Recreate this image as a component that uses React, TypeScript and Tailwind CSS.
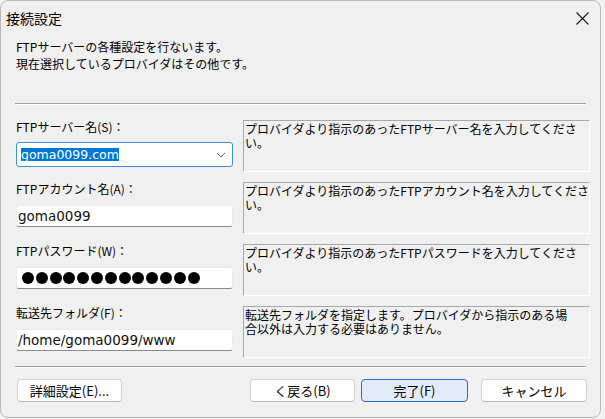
import React from 'react';

interface Field {
  label: string;
  help: string[];
  kind: 'combo' | 'text' | 'password';
  value: string;
}

const fields: Field[] = [
  {
    label: 'FTPサーバー名(S)：',
    help: ['プロバイダより指示のあったFTPサーバー名を入力してくださ', 'い。'],
    kind: 'combo',
    value: 'goma0099.com',
  },
  {
    label: 'FTPアカウント名(A)：',
    help: ['プロバイダより指示のあったFTPアカウント名を入力してくださ', 'い。'],
    kind: 'text',
    value: 'goma0099',
  },
  {
    label: 'FTPパスワード(W)：',
    help: ['プロバイダより指示のあったFTPパスワードを入力してくださ', 'い。'],
    kind: 'password',
    value: '',
  },
  {
    label: '転送先フォルダ(F)：',
    help: ['転送先フォルダを指定します。プロバイダから指示のある場', '合以外は入力する必要はありません。'],
    kind: 'text',
    value: '/home/goma0099/www',
  },
];

function Separator() {
  return <div className="ml-[14px] w-[571px] border-t border-b border-t-[#a0a0a0] border-b-[#ffffff]" />;
}

function FieldInput({ field }: { field: Field }) {
  if (field.kind === 'combo') {
    return (
      <div className="flex h-[25px] w-[217px] items-center justify-between rounded-[3px] border border-[#3d8ee0] bg-white pl-[4px] pr-[6px]">
        <span className="bg-[#0078d7] font-['DejaVu_Sans',sans-serif] text-[12.5px] leading-[13px] text-white">
          {field.value}
        </span>
        <svg width="10" height="6" viewBox="0 0 10 6" fill="none">
          <polyline points="1,1 5,5 9,1" stroke="#606060" strokeWidth="1" />
        </svg>
      </div>
    );
  }

  return (
    <div className="mt-px flex h-[22px] w-[217px] items-center rounded-[3px] border border-[#ececec] border-b-[#8a8a8a] bg-white pl-[1px]">
      {field.kind === 'password' ? (
        <div className="flex gap-[1.8px] pl-[4px]">
          {Array.from({ length: 13 }).map((_, i) => (
            <span key={i} className="h-[12px] w-[12px] rounded-full bg-black" />
          ))}
        </div>
      ) : (
        <span className="font-['DejaVu_Sans',sans-serif] text-[13.5px] text-[#111]">{field.value}</span>
      )}
    </div>
  );
}

export default function App() {
  return (
    <div className="h-[419px] w-[605px] overflow-hidden bg-[#f3f3f3] font-['Noto_Sans_CJK_JP',sans-serif] text-black">
      <div className="h-[418px] w-[601px] rounded-[8px] border border-[#b9b9b9] bg-[#f0f0f0]">
        {/* title bar */}
        <div className="flex h-[34px] items-center justify-between pl-[5px] pr-[11px]">
          <span className="text-[14px] leading-none">接続設定</span>
          <svg width="13" height="13" viewBox="0 0 13 13" fill="none">
            <line x1="0.5" y1="0.5" x2="12.5" y2="12.5" stroke="#1a1a1a" strokeWidth="1.1" />
            <line x1="12.5" y1="0.5" x2="0.5" y2="12.5" stroke="#1a1a1a" strokeWidth="1.1" />
          </svg>
        </div>

        <div className="mt-[3px] pl-[15px] text-[12px] leading-[17px]">
          <p>FTPサーバーの各種設定を行ないます。</p>
          <p>現在選択しているプロバイダはその他です。</p>
        </div>

        <div className="mt-[31px]">
          <Separator />
        </div>

        <div className="mt-[15px] flex flex-col gap-[10px] pl-[15px]">
          {fields.map((field) => (
            <div key={field.label} className="grid h-[52px] grid-cols-[217px_347px] gap-x-[10px]">
              <div className="flex flex-col">
                <span className="mb-[9px] text-[12px] leading-[13px]">{field.label}</span>
                <FieldInput field={field} />
              </div>
              <div className="border border-t-[#a8a8a8] border-l-[#a8a8a8] border-r-[#ffffff] border-b-[#ffffff] pl-px pt-px">
                {field.help.map((line) => (
                  <p key={line} className="whitespace-nowrap text-[12px] leading-[14px]">
                    {line}
                  </p>
                ))}
              </div>
            </div>
          ))}
        </div>

        <div className="mt-[8px]">
          <Separator />
        </div>

        <div className="mt-[11px] flex items-center pl-[16px] pr-[13px] text-[13px]">
          <button className="h-[23px] w-[105px] rounded-[4px] border border-[#d0d0d0] border-b-[#b8b8b8] bg-[#fdfdfd] leading-none">
            詳細設定(E)...
          </button>
          <div className="ml-auto flex items-center">
            <button className="h-[23px] w-[105px] rounded-[4px] border border-[#d0d0d0] border-b-[#b8b8b8] bg-[#fdfdfd] leading-none">
              く戻る(B)
            </button>
            <button className="ml-[6px] h-[23px] w-[107px] rounded-[4px] border border-[#1f6fc4] bg-[#e1ecf8] leading-none">
              完了(F)
            </button>
            <button className="ml-[13px] h-[23px] w-[106px] rounded-[4px] border border-[#d0d0d0] border-b-[#b8b8b8] bg-[#fdfdfd] leading-none">
              キャンセル
            </button>
          </div>
        </div>
      </div>
    </div>
  );
}
